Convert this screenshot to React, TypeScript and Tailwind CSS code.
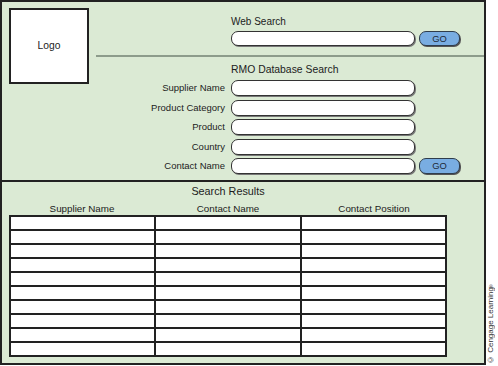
export default function App() {
  const labels = ["Supplier Name", "Product Category", "Product", "Country", "Contact Name"];
  const rows = Array.from({ length: 10 }, (_, i) => i);
  return (
    <div className="flex w-[498px] h-[366px] bg-white font-['Liberation_Sans',Arial,sans-serif] text-[#1c1c1c]">
      <div className="w-[486px] h-[365px] border-2 border-[#222] bg-[#dbead4] flex flex-col">
        {/* top section */}
        <div className="h-[180px] border-b-2 border-[#222] flex">
          <div className="ml-[7px] mt-[6px] w-[80px] h-[76px] bg-white border-2 border-[#222] flex items-center justify-center text-[10.3px] leading-none">
            Logo
          </div>
          <div className="ml-[7px] flex-1 flex flex-col">
            <div className="pl-[135px] pt-[13px] text-[10px] leading-[14px]">Web Search</div>
            <div className="pl-[135px] mt-[2px] flex gap-[4px]">
              <div className="w-[184px] h-[15px] bg-white border border-[#333] rounded-[7px] shadow-[1px_1px_0_#777]" />
              <div className="w-[41px] h-[15px] bg-[#79ade2] border border-[#2f3d4c] rounded-[7px] flex items-center justify-center text-[9.4px] leading-none text-[#1d2a38] shadow-[1px_1px_0_#555]">
                GO
              </div>
            </div>
            <div className="mt-[9px] h-[2px] bg-[#8d9c8b]" />
            <div className="pl-[135px] mt-[6px] text-[10.4px] leading-[14px]">RMO Database Search</div>
            <div className="mt-[3px] flex flex-col gap-[3.5px]">
              {labels.map((l, i) => (
                <div key={l} className="flex items-center h-[16px]">
                  <div className="w-[129px] text-right text-[9.5px] leading-none">{l}</div>
                  <div className="ml-[6px] w-[184px] h-[16px] bg-white border border-[#333] rounded-[7px] shadow-[1px_1px_0_#777]" />
                  {i === labels.length - 1 && (
                    <div className="ml-[4px] w-[41px] h-[16px] bg-[#79ade2] border border-[#2f3d4c] rounded-[7px] flex items-center justify-center text-[9.4px] leading-none text-[#1d2a38] shadow-[1px_1px_0_#555]">
                      GO
                    </div>
                  )}
                </div>
              ))}
            </div>
          </div>
        </div>
        {/* bottom section */}
        <div className="flex-1 pl-[7px] pt-[3px]">
          <div className="w-[438px] text-center text-[10.8px] leading-[13px]">Search Results</div>
          <div className="w-[438px] mt-[5px] grid grid-cols-3 text-center text-[9.8px] leading-[12px]">
            <div>Supplier Name</div>
            <div>Contact Name</div>
            <div>Contact Position</div>
          </div>
          <div className="w-[438px] border-t-2 border-l-2 border-[#222] bg-white">
            {rows.map((r) => (
              <div key={r} className="grid grid-cols-3 h-[14px]">
                <div className="border-r-2 border-b-2 border-[#222]" />
                <div className="border-r-2 border-b-2 border-[#222]" />
                <div className="border-r-2 border-b-2 border-[#222]" />
              </div>
            ))}
          </div>
        </div>
      </div>
      <div className="flex-1 flex items-end pb-[2px] pl-[1px]">
        <div className="[writing-mode:vertical-rl] rotate-180 text-[8px] leading-[8px] whitespace-nowrap text-[#333]">
          © Cengage Learning<sup className="text-[5px]">®</sup>
        </div>
      </div>
    </div>
  );
}
